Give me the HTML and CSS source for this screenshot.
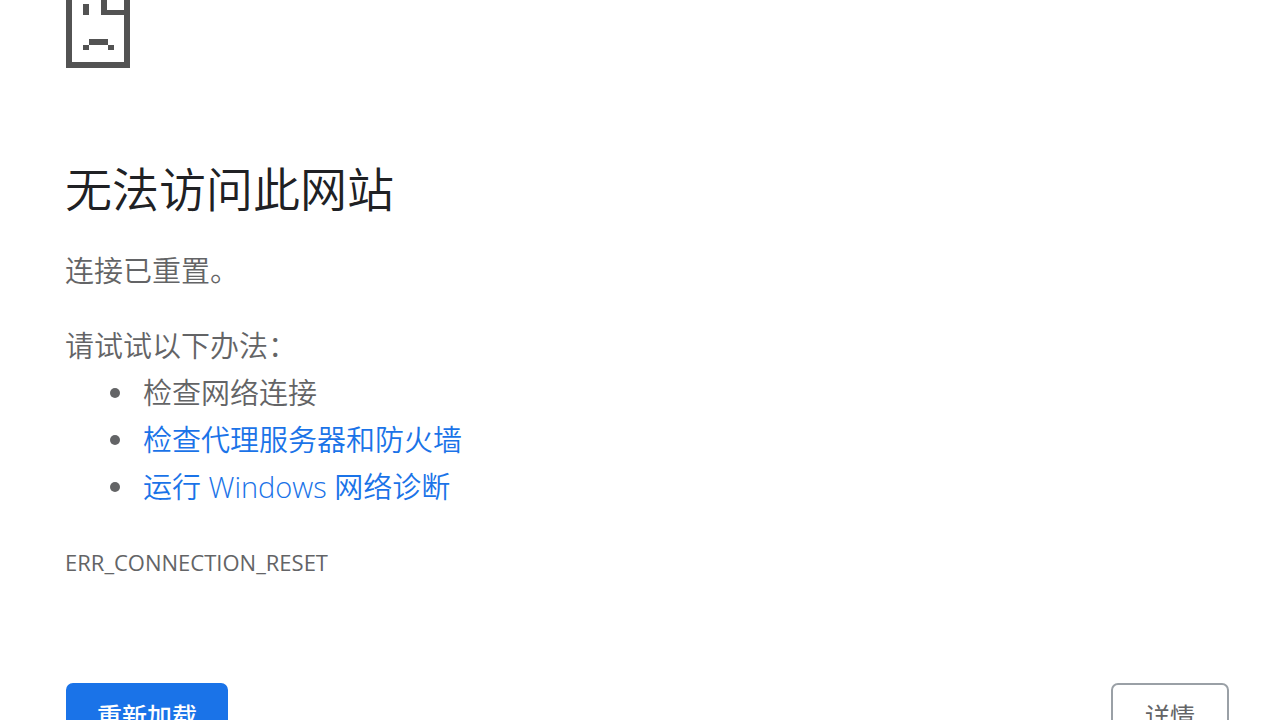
FILE: index.html
```html
<!DOCTYPE html>
<html lang="zh-CN">
<head>
    <meta charset="UTF-8">
    <meta name="viewport" content="width=device-width, initial-scale=1.0">
    <title>无法访问此网站</title>
    <link rel="stylesheet" href="styles.css">
</head>
<body>

<main class="error-page">
    <!-- Sad page icon -->
    <svg class="icon" width="64" height="68" viewBox="0 0 64 68" fill="#535353" shape-rendering="crispEdges" aria-hidden="true">
        <path d="M0 0h6v62h52V15H35V0h6v10h17V0h6v68H0z"/>
        <path d="M17 4h6v11h-6z"/>
        <path d="M23 39h19v6H23zM17 45h6v5h-6zM42 45h6v5h-6z"/>
    </svg>

    <h1>无法访问此网站</h1>
    <p class="summary">连接已重置。</p>

    <div class="suggestions">
        <p>请试试以下办法：</p>
        <ul>
            <li>检查网络连接</li>
            <li><a href="#proxy">检查代理服务器和防火墙</a></li>
            <li><a href="#diagnose">运行 Windows 网络诊断</a></li>
        </ul>
    </div>

    <p class="error-code">ERR_CONNECTION_RESET</p>

    <div class="buttons">
        <button type="button" class="reload">重新加载</button>
        <button type="button" class="details">详情</button>
    </div>
</main>

</body>
</html>
```

FILE: styles.css
```css
body {
    margin: 0;
    background-color: #fff;
    color: #636466;
    font-family: "Open Sans", "Noto Sans CJK SC", sans-serif;
    font-size: 29px;
    font-weight: 350;
    line-height: 47px;
    overflow: hidden;
}

.error-page {
    padding: 0 51px 0 65px;
}

.icon {
    display: block;
    margin-left: 1px;
}

h1 {
    margin: 93px 0 30px;
    color: #202124;
    font-size: 47px;
    font-weight: 350;
    line-height: 56px;
}

p {
    margin: 0;
}

.suggestions {
    margin-top: 28px;
}

ul {
    margin: 0;
    padding-left: 45px;
    list-style: none;
}

li {
    display: flex;
    align-items: center;
    gap: 23px;
}

/* Round bullet */
li::before {
    content: "";
    width: 10px;
    height: 10px;
    border-radius: 50%;
    background-color: #636466;
}

a {
    color: #1a73e8;
    text-decoration: none;
}

.error-code {
    margin-top: 32px;
    font-size: 22px;
    font-weight: 400;
    line-height: 40px;
}

/* Reload on the left, details on the right */
.buttons {
    display: flex;
    justify-content: space-between;
    margin-top: 101px;
    padding-left: 1px;
}

button {
    padding: 11px 29px;
    border: 2px solid #1a73e8;
    border-radius: 7px;
    font-family: inherit;
    font-size: 25px;
    line-height: 40px;
    cursor: pointer;
}

.reload {
    background-color: #1a73e8;
    color: #fff;
    font-weight: 500;
}

.details {
    padding: 11px 32px;
    background-color: #fff;
    border-color: #9aa0a6;
    color: #636466;
    font-weight: 400;
}
```
